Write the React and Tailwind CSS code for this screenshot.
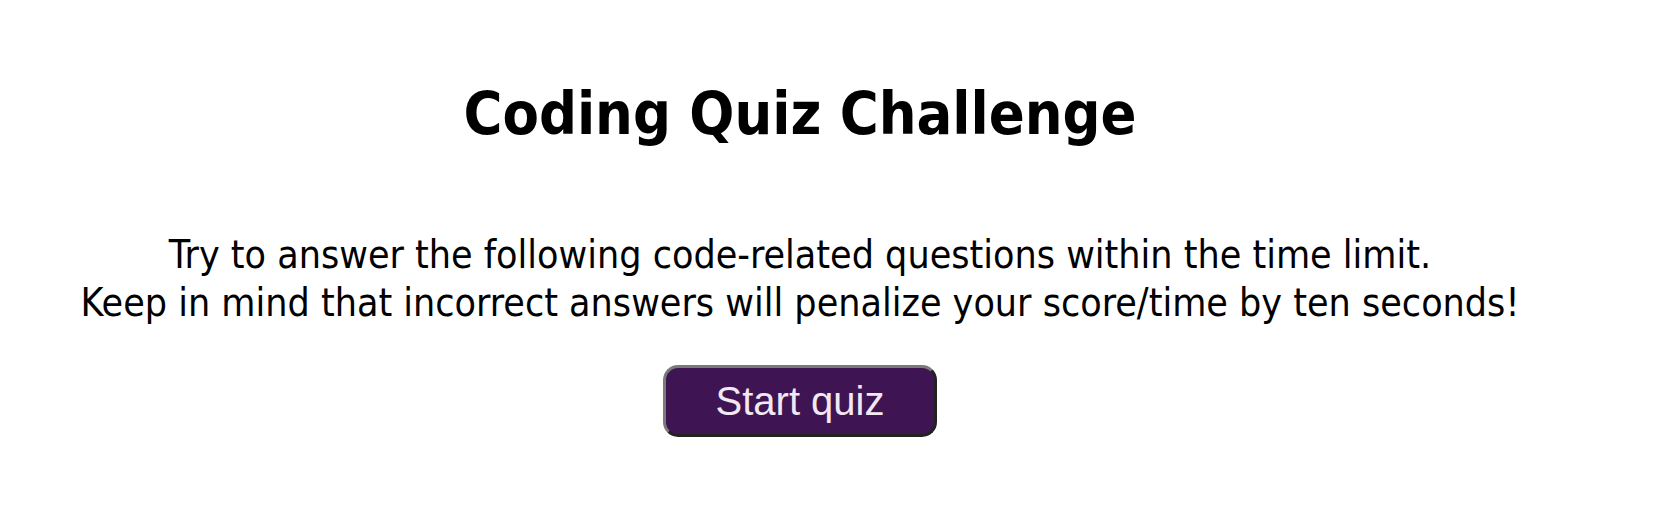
export default function App() {
  return (
    <div className="flex w-full flex-col items-center bg-white pr-[57px] text-center text-black">
      <h1 className="mt-[82px] text-[59px] font-bold leading-[64px] [font-family:'DejaVu_Sans_Condensed','DejaVu_Sans',sans-serif] [font-stretch:condensed]">
        Coding Quiz Challenge
      </h1>
      <p className="mt-[85px] text-[39px] leading-[48px] [font-family:'DejaVu_Sans_Condensed','DejaVu_Sans',sans-serif] [font-stretch:condensed]">
        Try to answer the following code-related questions within the time limit.
        <br />
        Keep in mind that incorrect answers will penalize your score/time by ten seconds!
      </p>
      <button className="mt-[38px] h-[72px] w-[274px] rounded-[15px] border-[3px] border-t-[#7a7a7a] border-l-[#7a7a7a] border-r-[#222] border-b-[#222] bg-[#3e1552] text-[40px] text-[#f2e8f2] [font-family:'Liberation_Sans',Arial,sans-serif]">
        Start quiz
      </button>
    </div>
  );
}
